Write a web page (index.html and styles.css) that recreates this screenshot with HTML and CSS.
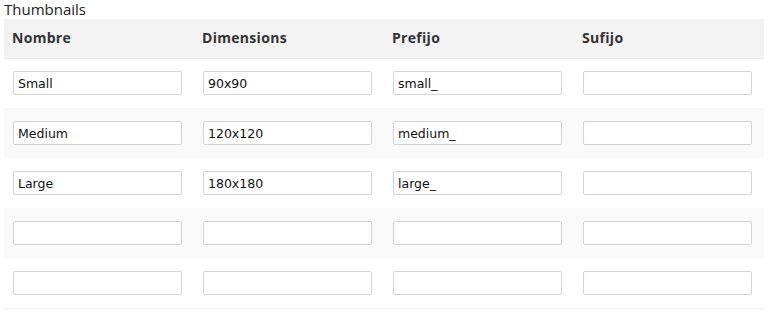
FILE: index.html
```html
<!DOCTYPE html>
<html>
<head>
<meta charset="utf-8">
<link rel="stylesheet" href="styles.css">
</head>
<body>
<div class="panel">
  <div class="title">Thumbnails</div>
  <table class="thumbs">
    <thead>
      <tr><th>Nombre</th><th>Dimensions</th><th>Prefijo</th><th>Sufijo</th></tr>
    </thead>
    <tbody>
      <tr><td><input type="text" value="Small"></td><td><input type="text" value="90x90"></td><td><input type="text" value="small_"></td><td><input type="text" value=""></td></tr>
      <tr><td><input type="text" value="Medium"></td><td><input type="text" value="120x120"></td><td><input type="text" value="medium_"></td><td><input type="text" value=""></td></tr>
      <tr><td><input type="text" value="Large"></td><td><input type="text" value="180x180"></td><td><input type="text" value="large_"></td><td><input type="text" value=""></td></tr>
      <tr><td><input type="text" value=""></td><td><input type="text" value=""></td><td><input type="text" value=""></td><td><input type="text" value=""></td></tr>
      <tr><td><input type="text" value=""></td><td><input type="text" value=""></td><td><input type="text" value=""></td><td><input type="text" value=""></td></tr>
    </tbody>
  </table>
</div>
</body>
</html>
```
FILE: styles.css
```css
html, body {
  margin: 0;
  padding: 0;
  background: #ffffff;
}
.panel {
  padding: 0 9px 0 4px;
}
.title {
  font-family: "Open Sans", sans-serif;
  font-size: 15px;
  line-height: 19px;
  color: #222;
}
.thumbs {
  width: 760px;
  border-collapse: collapse;
  table-layout: fixed;
  border-bottom: 1px solid #eeeeee;
}
.thumbs th {
  box-sizing: border-box;
  background: #f3f3f3;
  height: 39px;
  padding: 0 0 1px 8px;
  text-align: left;
  font-family: "Open Sans", sans-serif;
  font-weight: 700;
  font-size: 14px;
  letter-spacing: 0.3px;
  color: #333;
  border-bottom: 1px solid #ececec;
}
.thumbs td {
  box-sizing: border-box;
  height: 50px;
  padding: 0 0 0 9px;
  vertical-align: middle;
}
.thumbs tbody tr:nth-child(even) td {
  background: #f9f9f9;
}
.thumbs input {
  box-sizing: border-box;
  display: block;
  width: 169px;
  height: 24px;
  margin: 0;
  padding: 0 4px;
  border: 1px solid #d4d4d4;
  border-radius: 2px;
  background: #fff;
  font-family: "DejaVu Sans", Verdana, sans-serif;
  font-size: 12.5px;
  color: #111;
  outline: none;
}
```
